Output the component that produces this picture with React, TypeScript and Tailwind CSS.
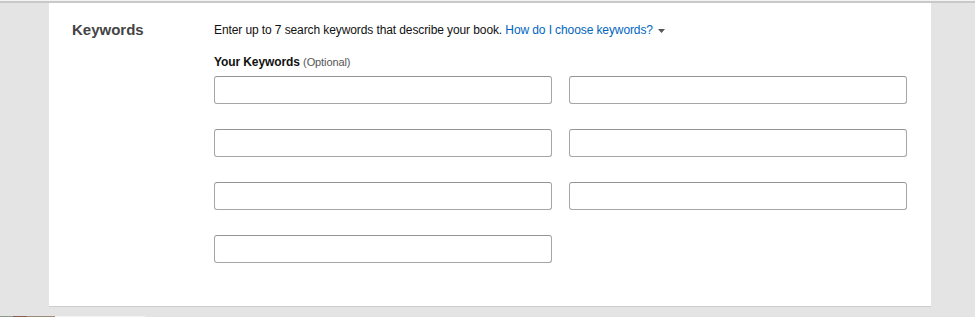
import React from "react";

const KeywordInput = () => (
  <input
    type="text"
    className="h-[28px] w-[338px] rounded-[3px] border border-[#a6a6a6] border-t-[#949494] bg-white px-2 text-[13px] outline-none"
  />
);

const App = () => {
  const slots = [0, 1, 2, 3, 4, 5, 6];
  return (
    <div
      className="flex h-[317px] w-[975px] flex-col overflow-hidden bg-[#e4e4e4]"
      style={{ fontFamily: '"Liberation Sans", Arial, sans-serif' }}
    >
      {/* top rule */}
      <div className="h-px bg-[#f3f3f3]" />
      <div className="h-[2px] bg-[#c9c9c9]" />
      {/* panel */}
      <div className="ml-[49px] flex h-[304px] w-[882px] border-b border-[#cdcdcd] bg-white pl-[23px]">
        <div className="w-[142px] pt-[16px] text-[15px] font-bold text-[#444]">
          Keywords
        </div>
        <div className="flex flex-col pt-[18px]">
          <p className="text-[12px] leading-[18px] tracking-[-0.1px] text-[#111]">
            Enter up to 7 search keywords that describe your book.{" "}
            <a href="#" className="text-[#0066c0]">
              How do I choose keywords?
            </a>
            <span className="ml-[5px] inline-block align-middle">
              <svg width="7" height="4" viewBox="0 0 7 4" className="block">
                <path d="M0 0h7L3.5 4z" fill="#555" />
              </svg>
            </span>
          </p>
          <p className="mt-[15px] text-[12px] leading-[16px] tracking-[-0.1px] text-[#111]">
            <span className="font-bold">Your Keywords</span>{" "}
            <span className="text-[11px] text-[#555]">(Optional)</span>
          </p>
          <div className="mt-[6px] grid grid-cols-[338px_338px] gap-x-[17px] gap-y-[25px]">
            {slots.map((i) => (
              <KeywordInput key={i} />
            ))}
          </div>
        </div>
      </div>
      <div className="flex-1" />
      {/* taskbar sliver */}
      <div className="flex h-px">
        <div className="w-[13px] bg-[#8a9a8a]" />
        <div className="w-[14px] bg-[#8b5a4a]" />
        <div className="w-[28px] bg-[#9a8a7a]" />
        <div className="w-[90px] bg-[#f2f2f2]" />
      </div>
    </div>
  );
};

export default App;
